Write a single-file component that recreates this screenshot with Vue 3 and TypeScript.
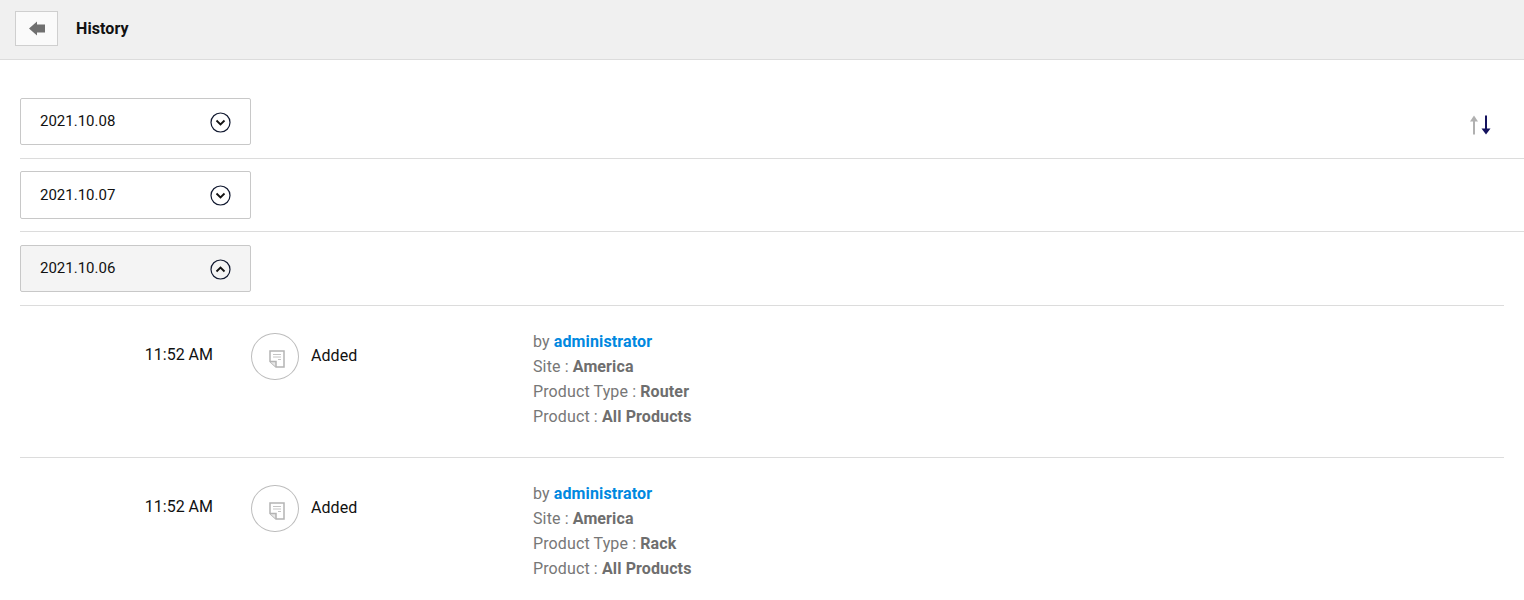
<script setup lang="ts">
interface HistoryItem {
  time: string
  user: string
  site: string
  type: string
  product: string
}

const dates = [
  { label: '2021.10.08', open: false },
  { label: '2021.10.07', open: false },
  { label: '2021.10.06', open: true },
]

const items: HistoryItem[] = [
  { time: '11:52 AM', user: 'administrator', site: 'America', type: 'Router', product: 'All Products' },
  { time: '11:52 AM', user: 'administrator', site: 'America', type: 'Rack', product: 'All Products' },
]
</script>

<template>
  <div class="page">
    <header class="top-bar">
      <button class="back-btn" type="button" aria-label="Back">
        <svg width="16" height="15" viewBox="0 0 16 15">
          <path d="M0 7.5 L8 0.5 V3.5 H16 V11.5 H8 V14.5 Z" fill="#6f6f6f" />
        </svg>
      </button>
      <h1 class="title">History</h1>
    </header>

    <main class="content">
      <section v-for="(d, i) in dates" :key="d.label" class="date-group" :class="{ open: d.open }">
        <button class="date-btn" type="button">
          <span>{{ d.label }}</span>
          <svg class="chev" width="21" height="21" viewBox="0 0 21 21">
            <circle cx="10.5" cy="10.5" r="9.5" fill="none" stroke="#10182f" stroke-width="1.2" />
            <path
              :d="d.open ? 'M6.5 12.5 L10.5 8.5 L14.5 12.5' : 'M6.5 8.5 L10.5 12.5 L14.5 8.5'"
              fill="none"
              stroke="#111"
              stroke-width="1.8"
            />
          </svg>
        </button>
        <svg v-if="i === 0" class="sort" width="22" height="20" viewBox="0 0 22 20">
          <path d="M5 19.5 V5" stroke="#b0b0b0" stroke-width="2" />
          <path d="M1 6.5 L5 0.5 L9 6.5 Z" fill="#b0b0b0" />
          <path d="M17 0.5 V15" stroke="#14125e" stroke-width="2" />
          <path d="M12.5 13.5 L17 19.5 L21.5 13.5 Z" fill="#14125e" />
        </svg>
      </section>

      <ul class="list">
        <li v-for="(item, i) in items" :key="i" class="row">
          <div class="time">{{ item.time }}</div>
          <div class="badge">
            <svg width="16" height="18" viewBox="0 0 16 18">
              <path d="M1 1 H15 V17 H7 L1 11.5 Z" fill="#fff" stroke="#b4b4b4" stroke-width="1.5" />
              <path d="M1 11.5 H7 V17" fill="#e8e8e8" stroke="#b4b4b4" stroke-width="1.5" />
              <path d="M4 4.5 H12 M4 7 H12 M9 9.5 H12" stroke="#c4c4c4" stroke-width="1" />
            </svg>
          </div>
          <div class="action">Added</div>
          <div class="details">
            <div>by <b class="user">{{ item.user }}</b></div>
            <div>Site : <b>{{ item.site }}</b></div>
            <div>Product Type : <b>{{ item.type }}</b></div>
            <div>Product : <b>{{ item.product }}</b></div>
          </div>
        </li>
      </ul>
    </main>
  </div>
</template>

<style>
html,
body {
  margin: 0;
  background: #fff;
}
</style>

<style scoped>
.page {
  font-family: Roboto, "Liberation Sans", sans-serif;
  height: 600px;
  overflow: hidden;
  color: #111;
}

.top-bar {
  display: flex;
  align-items: center;
  height: 59px;
  padding-left: 15px;
  background: #f0f0f0;
  border-bottom: 1px solid #dcdcdc;
}

.back-btn {
  display: flex;
  align-items: center;
  justify-content: center;
  width: 43px;
  height: 35px;
  margin-top: -2px;
  padding: 0;
  background: #fafafa;
  border: 1px solid #cfcfcf;
  box-sizing: border-box;
}

.title {
  margin: -2px 0 0 18px;
  font-size: 16px;
  font-weight: 700;
  letter-spacing: 0.1px;
}

.content {
  padding: 37.9px 0 0 20px;
}

.date-group {
  display: flex;
  align-items: center;
  justify-content: space-between;
  padding: 0 33px 12.5px 0;
  margin-bottom: 12.5px;
  border-bottom: 1px solid #dcdcdc;
}

.date-btn {
  display: flex;
  align-items: center;
  justify-content: space-between;
  width: 231px;
  height: 47.5px;
  padding: 0 19px;
  font: 15px Roboto, "Liberation Sans", sans-serif;
  color: #111;
  background: #fff;
  border: 1px solid #c8c8c8;
  border-radius: 2px;
  box-sizing: border-box;
}

.date-btn span {
  margin-top: -1px;
}

.chev {
  margin-top: 1px;
}

.open .date-btn {
  background: #f4f4f4;
}

.date-group.open {
  margin: 0 20px 0 0;
  padding-right: 0;
}

.sort {
  margin-top: 6px;
}

.list {
  margin: 0;
  padding: 0;
  list-style: none;
}

.row {
  display: flex;
  align-items: flex-start;
  height: 151px;
  margin-right: 20px;
  border-bottom: 1px solid #dcdcdc;
}

.row:last-child {
  border-bottom: 0;
}

.time {
  width: 193px;
  margin-top: 39px;
  font-size: 16px;
  line-height: 20px;
  text-align: right;
  color: #111;
}

.badge {
  display: flex;
  align-items: center;
  justify-content: center;
  width: 48px;
  height: 47.5px;
  margin: 27px 0 0 38px;
  padding: 4px 0 0 3px;
  border: 1px solid #bdbdbd;
  border-radius: 50%;
  box-sizing: border-box;
}

.action {
  width: 222px;
  margin: 40px 0 0 12px;
  font-size: 16px;
  line-height: 20px;
  letter-spacing: 0.05px;
}

.details {
  margin-top: 23px;
  font-size: 16px;
  line-height: 25px;
  letter-spacing: 0.12px;
  color: #777;
}

.details b {
  font-weight: 700;
  color: #6e6e6e;
}

.details .user {
  color: #0088e0;
}
</style>
